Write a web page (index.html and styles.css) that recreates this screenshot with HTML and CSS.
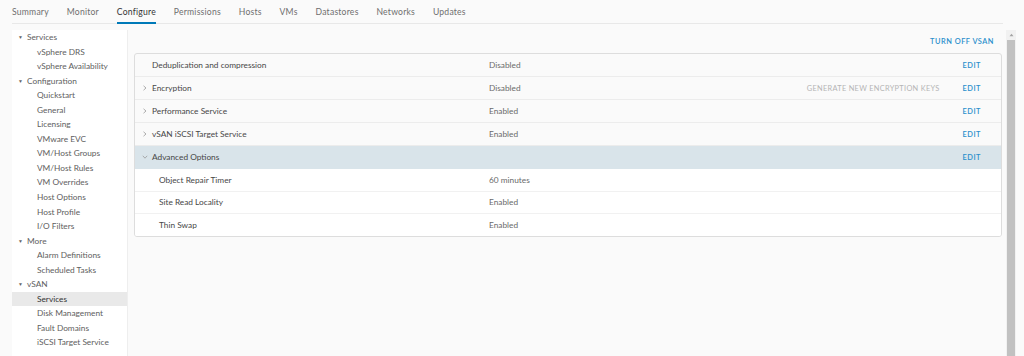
FILE: index.html
```html
<!DOCTYPE html>
<html>
<head>
<meta charset="utf-8">
<link rel="stylesheet" href="styles.css">
</head>
<body>
<nav class="tabs">
  <span class="tab">Summary</span>
  <span class="tab">Monitor</span>
  <span class="tab active">Configure</span>
  <span class="tab">Permissions</span>
  <span class="tab">Hosts</span>
  <span class="tab">VMs</span>
  <span class="tab">Datastores</span>
  <span class="tab">Networks</span>
  <span class="tab">Updates</span>
</nav>
<div class="layout">
  <aside class="sidebar">
    <div class="group"><span class="tri">▼</span>Services</div>
    <div class="item">vSphere DRS</div>
    <div class="item">vSphere Availability</div>
    <div class="group"><span class="tri">▼</span>Configuration</div>
    <div class="item">Quickstart</div>
    <div class="item">General</div>
    <div class="item">Licensing</div>
    <div class="item">VMware EVC</div>
    <div class="item">VM/Host Groups</div>
    <div class="item">VM/Host Rules</div>
    <div class="item">VM Overrides</div>
    <div class="item">Host Options</div>
    <div class="item">Host Profile</div>
    <div class="item">I/O Filters</div>
    <div class="group"><span class="tri">▼</span>More</div>
    <div class="item">Alarm Definitions</div>
    <div class="item">Scheduled Tasks</div>
    <div class="group"><span class="tri">▼</span>vSAN</div>
    <div class="item selected">Services</div>
    <div class="item">Disk Management</div>
    <div class="item">Fault Domains</div>
    <div class="item">iSCSI Target Service</div>
  </aside>
  <main class="main">
    <section class="content">
      <div class="actions"><span class="link">TURN OFF VSAN</span></div>
      <div class="card">
        <div class="row">
          <span class="chev"></span>
          <span class="label">Deduplication and compression</span>
          <span class="value">Disabled</span>
          <span class="extra"></span>
          <span class="link edit">EDIT</span>
        </div>
        <div class="row">
          <span class="chev"><svg width="6" height="6" viewBox="0 0 6 6"><path d="M1.5 0.8 L4 3 L1.5 5.2" fill="none" stroke="#9a9a9a" stroke-width="0.8"/></svg></span>
          <span class="label">Encryption</span>
          <span class="value">Disabled</span>
          <span class="extra">GENERATE NEW ENCRYPTION KEYS</span>
          <span class="link edit">EDIT</span>
        </div>
        <div class="row">
          <span class="chev"><svg width="6" height="6" viewBox="0 0 6 6"><path d="M1.5 0.8 L4 3 L1.5 5.2" fill="none" stroke="#9a9a9a" stroke-width="0.8"/></svg></span>
          <span class="label">Performance Service</span>
          <span class="value">Enabled</span>
          <span class="extra"></span>
          <span class="link edit">EDIT</span>
        </div>
        <div class="row">
          <span class="chev"><svg width="6" height="6" viewBox="0 0 6 6"><path d="M1.5 0.8 L4 3 L1.5 5.2" fill="none" stroke="#9a9a9a" stroke-width="0.8"/></svg></span>
          <span class="label">vSAN iSCSI Target Service</span>
          <span class="value">Enabled</span>
          <span class="extra"></span>
          <span class="link edit">EDIT</span>
        </div>
        <div class="row open">
          <span class="chev"><svg width="6" height="6" viewBox="0 0 6 6"><path d="M0.8 1.8 L3 4.2 L5.2 1.8" fill="none" stroke="#9a9a9a" stroke-width="0.8"/></svg></span>
          <span class="label">Advanced Options</span>
          <span class="value"></span>
          <span class="extra"></span>
          <span class="link edit">EDIT</span>
        </div>
        <div class="row sub">
          <span class="chev"></span>
          <span class="label">Object Repair Timer</span>
          <span class="value">60 minutes</span>
        </div>
        <div class="row sub">
          <span class="chev"></span>
          <span class="label">Site Read Locality</span>
          <span class="value">Enabled</span>
        </div>
        <div class="row sub last">
          <span class="chev"></span>
          <span class="label">Thin Swap</span>
          <span class="value">Enabled</span>
        </div>
      </div>
    </section>
    <div class="scrollbar">
      <div class="arrow"><svg width="5" height="4" viewBox="0 0 5 4"><path d="M0.5 3.2 L2.5 0.8 L4.5 3.2 Z" fill="#a3a3a3"/></svg></div>
      <div class="thumb"></div>
    </div>
  </main>
</div>
</body>
</html>
```

FILE: styles.css
```css
* { box-sizing: border-box; }
html, body { height: 100%; }
body {
  margin: 0;
  background: #fafafa;
  font-family: Lato, "Open Sans", sans-serif;
  font-size: 8.3px;
  color: #565656;
  overflow: hidden;
}
.tabs {
  display: flex;
  gap: 17.9px;
  height: 24px;
  margin: 0 21px 0 12px;
  border-bottom: 1px solid #e8e8e8;
  align-items: stretch;
}
.tab {
  display: flex;
  align-items: center;
  padding-top: 1px;
  color: #6f6f6f;
  border-bottom: 2px solid transparent;
  margin-bottom: -1px;
  font-size: 8.6px;
  letter-spacing: 0.22px;
}
.tab.active {
  color: #333;
  border-bottom-color: #0079b8;
}
.layout {
  display: flex;
  height: calc(100% - 24px);
  padding-top: 6px;
}
.sidebar {
  width: 116px;
  margin-left: 12px;
  background: #fff;
  border-right: 1px solid #eeeeee;
}
.group, .item {
  height: 14.55px;
  line-height: 14.55px;
  white-space: nowrap;
  color: #5e5e5e;
}
.group { padding-left: 6px; }
.tri {
  display: inline-block;
  width: 9px;
  font-size: 5px;
  color: #666;
  vertical-align: 1px;
}
.item { padding-left: 25px; }
.item.selected { background: #e9e9e9; color: #333; }
.main {
  flex: 1;
  display: flex;
}
.content {
  flex: 1;
  padding-left: 6px;
}
.actions {
  height: 23px;
  display: flex;
  align-items: center;
  justify-content: flex-end;
  padding-right: 8px;
  padding-bottom: 1px;
}
.link {
  color: #2a8fcc;
  font-weight: 600;
  font-size: 7.4px;
  letter-spacing: 0.5px;
}
.card {
  border: 1px solid #dddddd;
  border-radius: 3px;
  background: #fafafa;
  overflow: hidden;
}
.row {
  display: flex;
  align-items: center;
  height: 23.1px;
  border-bottom: 1px solid #ececec;
  padding-left: 7px;
  padding-right: 20px;
}
.row.open { background: #d9e4ea; border-bottom-color: #d9e4ea; }
.row.sub { background: #fff; height: 22.1px; border-bottom-color: #f1f1f1; }
.row.sub .label { padding-left: 7px; }
.row.last { border-bottom: none; }
.chev {
  width: 10px;
  display: flex;
  align-items: center;
}
.label {
  width: 337px;
  color: #474747;
}
.value {
  flex: 1;
  color: #6a6a6a;
}
.extra {
  color: #b5b5b5;
  font-size: 7.4px;
  letter-spacing: 0.3px;
  margin-right: 23px;
}
.scrollbar {
  width: 10px;
  margin: 0 8px 0 4px;
  background: #f1f1f1;
  display: flex;
  flex-direction: column;
}
.arrow {
  height: 9px;
  display: flex;
  align-items: center;
  justify-content: center;
}
.thumb {
  flex: 1;
  margin: 1px 1px 0;
  background: #c1c1c1;
}
```
